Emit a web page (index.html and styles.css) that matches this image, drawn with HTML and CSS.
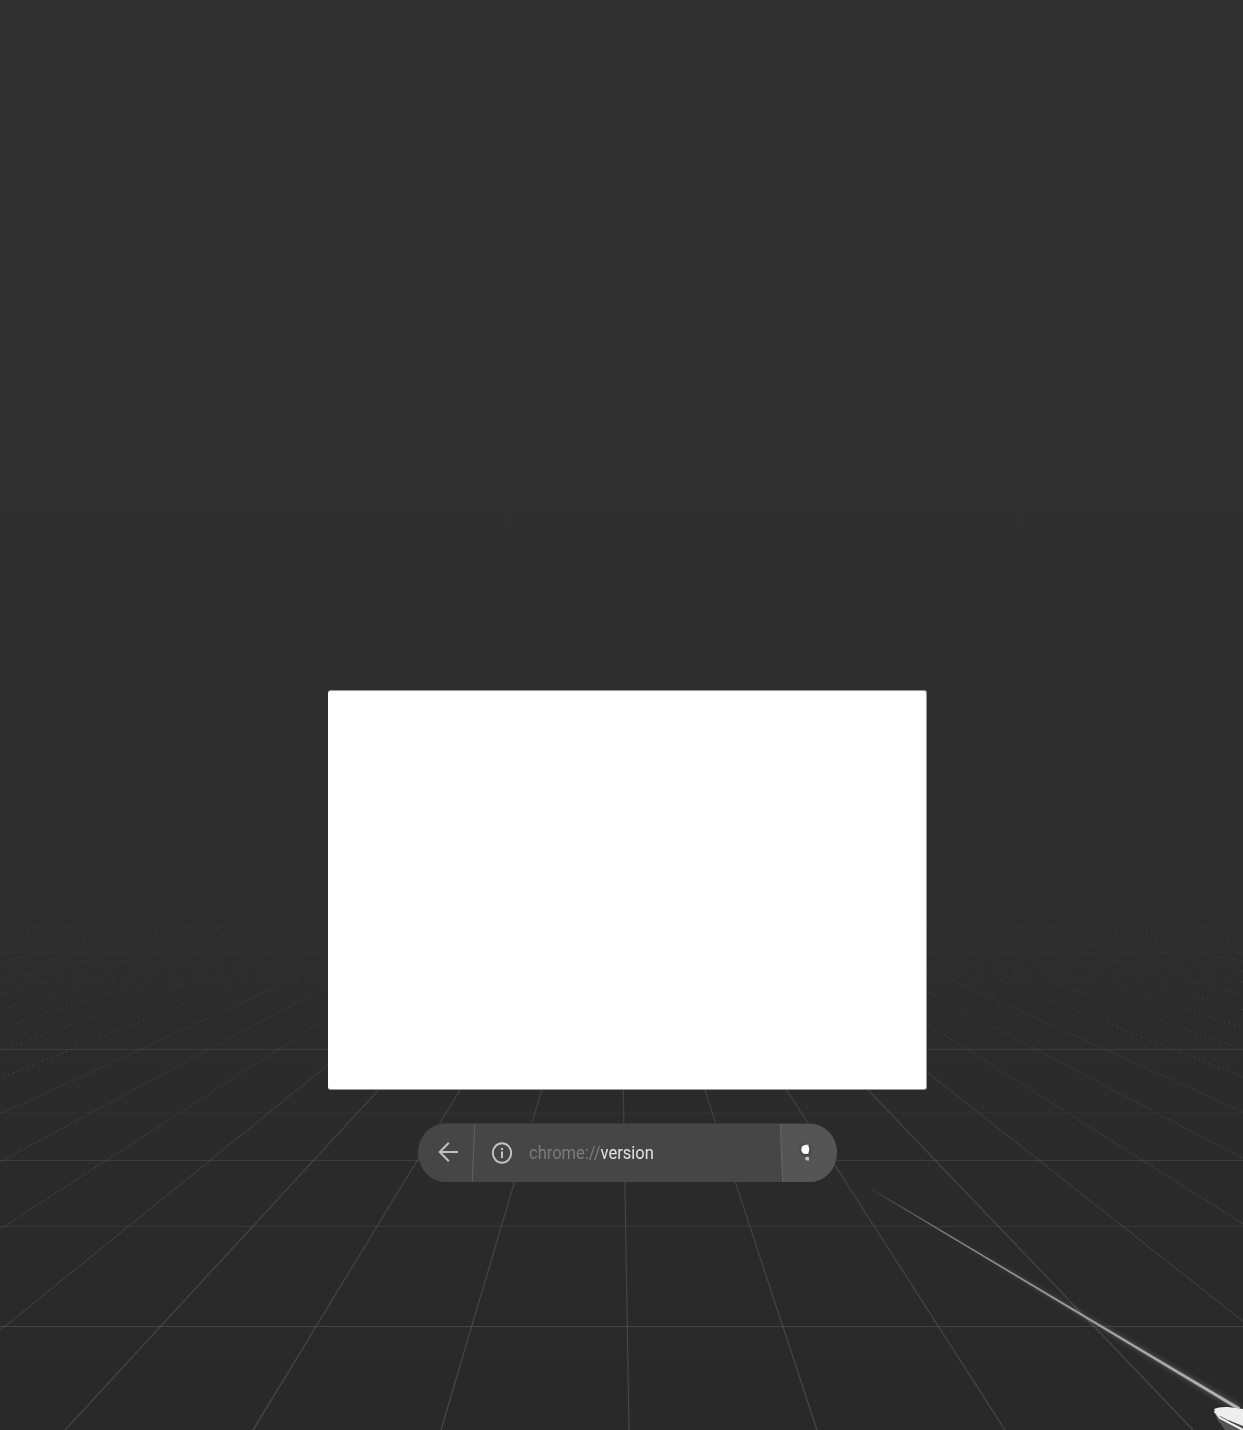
FILE: index.html
```html
<!DOCTYPE html>
<html lang="en">
<head>
<meta charset="utf-8">
<title>chrome://version</title>
<link rel="stylesheet" href="styles.css">
</head>
<body>
<main class="scene">
  <svg class="floor" viewBox="0 0 1243 1430" aria-hidden="true">
    <defs>
      <linearGradient id="fade" gradientUnits="userSpaceOnUse" x1="0" y1="927" x2="0" y2="1430">
        <stop offset="0" stop-color="#777" stop-opacity=".08"/>
        <stop offset=".3" stop-color="#777" stop-opacity=".3"/>
        <stop offset="1" stop-color="#777" stop-opacity=".42"/>
      </linearGradient>
      <linearGradient id="farfade" gradientUnits="userSpaceOnUse" x1="0" y1="927" x2="0" y2="1230">
        <stop offset="0" stop-color="#888" stop-opacity=".15"/>
        <stop offset="1" stop-color="#888" stop-opacity=".55"/>
      </linearGradient>
      <linearGradient id="ray" gradientUnits="userSpaceOnUse" x1="870" y1="1188" x2="1240" y2="1409">
        <stop offset="0" stop-color="#aaa" stop-opacity=".1"/>
        <stop offset=".2" stop-color="#aaa" stop-opacity=".7"/>
        <stop offset="1" stop-color="#b4b4b4"/>
      </linearGradient>
      <filter id="soft" x="-10%" y="-10%" width="120%" height="120%"><feGaussianBlur stdDeviation="2.5"/></filter>
    </defs>
    <g class="rows">
      <path class="row-faint" d="M0 927.5H1243M0 952.5H1243M0 1112.5H1243"/>
      <path class="row-mid" d="M0 1226.5H1243"/>
      <path class="row-strong" d="M0 1049.5H1243M0 1160.5H1243"/>
      <path class="row-near" d="M0 1326.5H1243"/>
    </g>
    <path class="columns" d="M620.6 927L629 1430M590 927L441 1430M559.4 927L253 1430M528.8 927L65 1430M651.2 927L817 1430M681.8 927L1005 1430M712.4 927L1193 1430"/>
    <path class="columns-side" d="M498.2 927L-123 1430M743 927L1381 1430"/>
    <path class="columns-far" d="M467.6 927L-311 1430M437 927L-499 1430M406.4 927L-687 1430M773.6 927L1569 1430M804.2 927L1757 1430M834.8 927L1945 1430"/>
    <path class="columns-farthest" d="M375.8 927L-875 1430M345.2 927L-1063 1430M314.6 927L-1251 1430M284 927L-1439 1430M253.4 927L-1627 1430M222.8 927L-1815 1430M192.2 927L-2003 1430M161.6 927L-2191 1430M131 927L-2379 1430M100.4 927L-2567 1430M69.8 927L-2755 1430M39.2 927L-2943 1430M865.4 927L2133 1430M896 927L2321 1430M926.6 927L2509 1430M957.2 927L2697 1430M987.8 927L2885 1430M1018.4 927L3073 1430M1049 927L3261 1430M1079.6 927L3449 1430M1110.2 927L3637 1430M1140.8 927L3825 1430M1171.4 927L4013 1430M1202 927L4201 1430"/>
    <path class="ray-glow" d="M930 1224L1241 1406.5L1238 1411Z"/>
    <path class="ray" d="M870 1187.8L1240 1407.6L1238.6 1410.2L870 1188.8Z"/>
    <path class="controller-side" d="M1214 1409L1217 1419L1225 1430H1243V1412Z"/>
    <path class="controller-rim" d="M1214.5 1411L1220 1418L1243 1430"/>
    <path class="controller-top" d="M1214 1409Q1219 1406.5 1228 1407L1243 1409V1426L1228 1420L1218 1415Z"/>
    <path class="controller-line" d="M1229 1421L1243 1427"/>
  </svg>
  <section class="window" aria-label="Page content"></section>
  <nav class="bar">
    <button class="back" aria-label="Back">
      <svg width="20" height="20" viewBox="0 0 20 20"><path d="M20 10H2M10.8 .8L1.8 10L10.8 19.2"/></svg>
    </button>
    <div class="address">
      <svg class="info" width="22" height="22" viewBox="0 0 22 22"><ellipse cx="11" cy="11" rx="9.2" ry="9.8"/><path d="M11 9.5V16M11 6V8"/></svg>
      <span class="url"><span class="scheme">chrome://</span>version</span>
    </div>
    <button class="menu" aria-label="Menu">
      <svg width="20" height="28" viewBox="0 0 20 28"><ellipse class="halo" cx="9.5" cy="11.2" rx="5.5" ry="6"/><path class="dot" d="M10 5.6H12.5V9H10ZM10.5 13H12.5V15H10.5ZM9.3 18.3Q11 17.3 13 18.3V21.5H10.5L9.3 20.3Z"/><ellipse class="cursor" cx="9.3" cy="10.5" rx="4" ry="4.6"/></svg>
    </button>
  </nav>
</main>
</body>
</html>
```
FILE: styles.css
```css
* { box-sizing: border-box; }
body { margin: 0; background: #2a2a2a; }
.scene {
  position: relative;
  width: 1243px;
  height: 1430px;
  padding: 690px 0 0 328px;
  overflow: hidden;
  background: linear-gradient(#2f2f2f 0, #2e2e2e 900px, #2b2b2b 1080px, #292929 1430px);
  font-family: Roboto, sans-serif;
}
.floor { position: absolute; inset: 0; width: 1243px; height: 1430px; }
.floor path { fill: none; }
.row-faint { stroke: #303030; }
.row-mid { stroke: #363636; }
.row-strong { stroke: #3d3d3d; }
.row-near { stroke: #444; }
.floor .columns { stroke: url(#fade); stroke-width: 1.1; }
.floor .columns-side { stroke: url(#fade); stroke-width: .9; }
.floor .columns-far { stroke: url(#farfade); stroke-width: .8; stroke-dasharray: 1.2 1.6; }
.floor .columns-farthest { stroke: url(#farfade); stroke-width: 1; stroke-dasharray: 1.2 4; }
.floor .ray-glow { fill: #aaa; opacity: .35; filter: url(#soft); }
.floor .ray { fill: url(#ray); }
.floor .controller-side { fill: #555; }
.floor .controller-rim { stroke: #eee; stroke-width: 2; }
.floor .controller-top { fill: #eee; }
.controller-line { stroke: #444; }
.window {
  position: relative;
  width: 599px;
  height: 400px;
  border: solid #999;
  border-width: 1px 1px 1px 0;
  border-radius: 3px;
  background: #fff;
}
.bar {
  position: relative;
  display: flex;
  width: 419px;
  height: 59px;
  margin: 33px 0 0 90px;
  border-top: 1px solid #3a3a3a;
  border-radius: 27px / 29.5px;
  overflow: hidden;
  background: #464646;
}
button { padding: 0; border: 0; background: none; }
.back {
  display: flex;
  align-items: center;
  width: 56px;
  padding: 0 0 2px 20px;
}
.back path { fill: none; stroke: #c2c2c2; stroke-width: 2; }
.address {
  position: relative;
  display: flex;
  align-items: center;
  width: 308px;
  padding-left: 17px;
  gap: 16px;
}
.address::before {
  content: "";
  position: absolute;
  left: -1px;
  top: 0;
  width: 1px;
  height: 100%;
  background: #626262;
  transform: skewX(-2.4deg);
}
.info { fill: none; stroke: #c2c2c2; stroke-width: 2; }
.url {
  padding-bottom: 1px;
  color: #e2e2e2;
  font-size: 17.5px;
  line-height: 20px;
  white-space: nowrap;
  transform: scaleX(.942);
  transform-origin: left;
}
.scheme { color: #7c7c7c; }
.menu {
  position: relative;
  display: flex;
  align-items: center;
  width: 55px;
  padding-left: 14px;
}
.menu::before {
  content: "";
  position: absolute;
  left: -1px;
  right: -3px;
  top: 0;
  bottom: 0;
  border-left: 1px solid #666;
  background: #555;
  transform: skewX(2.4deg);
}
.menu svg { position: relative; }
.halo { fill: #333; opacity: .6; filter: blur(1.5px); }
.dot { fill: #c4c4c4; }
.cursor { fill: #fff; }
```
